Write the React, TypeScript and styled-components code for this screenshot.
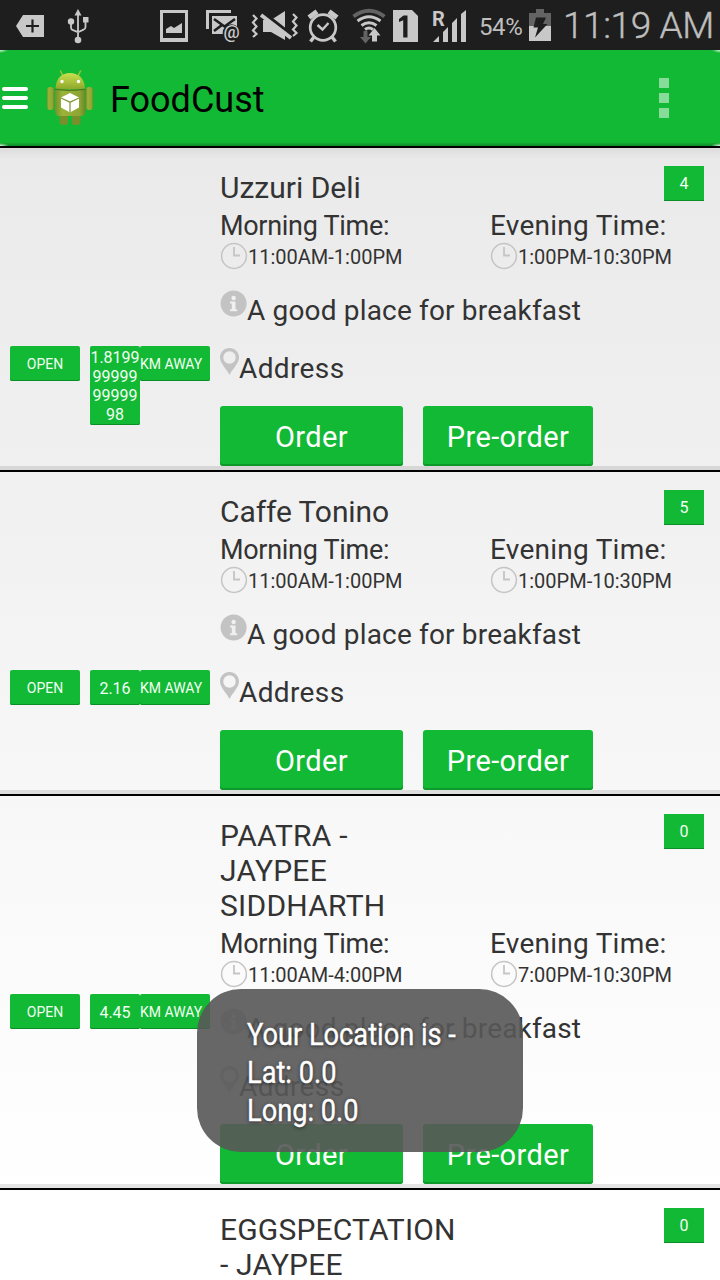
import React from "react";
import styled, { createGlobalStyle } from "styled-components";

const GREEN = "#12b934";
const INK = "#c8c8c8";
const DIM = "#636363";

const Global = createGlobalStyle`
  * { box-sizing: border-box; }
  html, body { margin: 0; padding: 0; }
  body { font-family: Roboto, "Noto Sans", sans-serif; color: #333; overflow: hidden; }
`;

const Screen = styled.div`
  position: relative;
  width: 720px;
  height: 1280px;
  overflow: hidden;
  background: linear-gradient(#eaeaea 148px, #f0f0f0 470px, #f8f8f8 820px, #fff 1200px);
`;

const StatusBar = styled.div`
  display: flex;
  height: 50px;
  background: #1e1e1e;
  color: #bebebe;
`;

const Glyph = styled.svg<{ $gap: number }>`
  flex: none;
  display: block;
  height: 50px;
  margin-left: ${(p) => p.$gap}px;
`;

const Text = styled.span<{ $size: number; $spacing?: number; $line?: number }>`
  font-size: ${(p) => p.$size}px;
  letter-spacing: ${(p) => p.$spacing ?? 0}px;
  line-height: ${(p) => p.$line ?? 35}px;
  white-space: pre;
`;

const Percent = styled(Text)`
  width: 45px;
  margin-left: 12px;
  padding-top: 2px;
`;

const Clock = styled(Text)`
  margin-left: 11px;
  padding-top: 1px;
  font-weight: 300;
  -webkit-text-stroke: 0.4px #bebebe;
`;

const ActionBar = styled.header`
  display: flex;
  align-items: center;
  height: 98px;
  padding-bottom: 2px;
  border-bottom: 2px solid #000;
  color: #000;
  background:
    radial-gradient(ellipse 8px 3px at 0 0, #d8f5dd, transparent) no-repeat,
    radial-gradient(ellipse 8px 3px at 100% 0, #d8f5dd, transparent) no-repeat,
    radial-gradient(ellipse 9px 3px at 0 100%, #e8f5ea, transparent) no-repeat,
    radial-gradient(ellipse 9px 3px at 100% 100%, #e8f5ea, transparent) no-repeat,
    linear-gradient(${GREEN} 92px, #0c8a26 96px);
`;

const Title = styled(Text)`
  padding-top: 6px;
`;

const MenuLines = styled.div`
  display: grid;
  gap: 5px;
  width: 26px;
  margin-left: 2px;
  margin-top: 2px;
`;

const MenuLine = styled.i`
  height: 4px;
  border-radius: 2px;
  background: #fff;
`;

const Robot = styled.svg`
  margin-left: 18px;
  margin-right: 16px;
  margin-top: 2px;
`;

const Overflow = styled.div`
  display: grid;
  gap: 5px;
  margin-left: auto;
  margin-right: 51px;
  margin-top: 2px;
`;

const Dot = styled.i`
  width: 10px;
  height: 10px;
  background: #88dc9a;
`;

const List = styled.main`
  display: flex;
  flex-direction: column;
`;

const Row = styled.article<{ $first?: boolean }>`
  display: grid;
  grid-template-columns: 220px 1fr;
  border-bottom: 2px solid #000;
  background: ${(p) =>
    p.$first ? "linear-gradient(rgba(0,0,0,.06), rgba(0,0,0,0) 12px)" : "none"};
  &::after {
    content: "";
    grid-column: 1 / 3;
    height: 4px;
    background: rgba(0, 0, 0, 0.1);
  }
`;

const Tags = styled.div`
  display: flex;
  align-items: flex-start;
  padding: 198px 0 0 10px;
`;

const Tag = styled.div<{ $width: number; $gap?: number }>`
  display: flex;
  justify-content: center;
  align-items: center;
  flex: none;
  width: ${(p) => p.$width}px;
  min-height: 35px;
  margin-left: ${(p) => p.$gap ?? 0}px;
  padding-top: 2px;
  border-radius: 2px;
  box-shadow: inset 0 -1px #0a8f27;
  background: ${GREEN};
  color: #f2fff4;
  font-size: 14px;
  line-height: 19px;
  text-align: center;
  white-space: pre;
`;

const AwayTag = styled(Tag)`
  justify-content: flex-start;
`;

const NumberTag = styled(Tag)`
  padding-bottom: 1px;
  font-size: 16px;
`;

const Count = styled(NumberTag)`
  border-radius: 0;
  padding-bottom: 2px;
`;

const Info = styled.div`
  padding-top: 18px;
`;

const Heading = styled.div`
  display: flex;
  justify-content: space-between;
  align-items: flex-start;
  padding-right: 16px;
  min-height: 39px;
`;

const Name = styled.h2<{ $spacing: number }>`
  margin: 0;
  padding-top: 4px;
  font-size: 30px;
  font-weight: 400;
  line-height: 35px;
  letter-spacing: ${(p) => p.$spacing}px;
  white-space: pre;
`;

const Hours = styled.div`
  display: grid;
  grid-template-columns: 270px 1fr;
  height: 66px;
`;

const Slot = styled.div`
  display: flex;
  flex-direction: column;
`;

const SlotTitle = styled(Text)<{ $drop: number }>`
  height: 37px;
  padding-top: ${(p) => p.$drop}px;
`;

const Line = styled.div<{ $height: number }>`
  display: flex;
  align-items: flex-start;
  height: ${(p) => p.$height}px;
`;

const Caption = styled(Text)<{ $drop: number }>`
  margin-top: ${(p) => p.$drop}px;
`;

const Icon = styled.svg<{ $drop?: number }>`
  display: block;
  flex: none;
  margin-top: ${(p) => p.$drop ?? 0}px;
`;

const Actions = styled.div`
  display: flex;
  gap: 20px;
`;

const Action = styled.button<{ $width: number }>`
  width: ${(p) => p.$width}px;
  height: 60px;
  padding: 2px 0 0;
  border: 0;
  border-radius: 3px;
  box-shadow: inset 0 -2px #0d9a2a;
  background: ${GREEN};
  color: #fff;
  font: 400 29px/58px Roboto, sans-serif;
  letter-spacing: 0.4px;
`;

const Toast = styled.div`
  position: absolute;
  left: 197px;
  top: 989px;
  width: 326px;
  height: 163px;
  padding: 26px 50px;
  border-radius: 44px;
  background: rgba(88, 88, 88, 0.91);
`;

const ToastText = styled.p`
  margin: 0;
  color: #fff;
  font-size: 32px;
  line-height: 38px;
  white-space: pre;
  text-shadow: 0 1px 4px #222;
  -webkit-text-stroke: 0.4px #fff;
  transform: scaleX(0.85);
  transform-origin: 0 0;
`;

const ClockIcon = () => (
  <Icon width="28" height="28" viewBox="0 0 28 28" fill="none" stroke="#c5c5c5">
    <circle cx="14" cy="14" r="12.4" strokeWidth="1.5" />
    <path d="M14 5v8.500h6" strokeWidth="1.8" />
  </Icon>
);

const InfoIcon = () => (
  <Icon $drop={19} width="27" height="28" viewBox="0 0 27 28">
    <circle cx="13.6" cy="13.5" r="13" fill="#c3c3c3" />
    <circle cx="13.6" cy="8" r="2.2" fill="#f0f0f0" />
    <path d="M10 11.500h5.500v7.800h1.700v1.900H10v-1.900h1.800v-5.800H10z" fill="#f0f0f0" />
  </Icon>
);

const PinIcon = () => (
  <Icon $drop={19} width="19" height="28" viewBox="0 0 19 28">
    <path
      d="M9.500 0C4.200 0 0 4.100 0 9.300 0 15.500 6.200 20.500 9.500 27 12.800 20.500 19 15.500 19 9.300 19 4.100 14.800 0 9.500 0zm0 3.300a6.200 6.200 0 1 1 0 12.400 6.200 6.200 0 0 1 0-12.400z"
      fill="#c3c3c3"
    />
  </Icon>
);

const RobotIcon = () => (
  <Robot width="48" height="56" viewBox="0 0 48 56">
    <defs>
      <linearGradient id="head" x1="0" x2="0" y1="0" y2="1">
        <stop offset="0" stopColor="#c9e04f" />
        <stop offset="1" stopColor="#8da62a" />
      </linearGradient>
      <linearGradient id="body" x1="0" x2="1" y1="0" y2="0">
        <stop offset="0" stopColor="#75922a" />
        <stop offset=".25" stopColor="#9bb338" />
        <stop offset=".8" stopColor="#8ea632" />
        <stop offset="1" stopColor="#6c882a" />
      </linearGradient>
    </defs>
    <path d="M14.500 1l3 6M34.500 1l-3 6" stroke="#a5bf38" strokeWidth="1.500" strokeLinecap="round" />
    <path d="M9.500 18.500C10 8 16 3 24 3s14.500 5 15 15.500q-15 2-29.500 0z" fill="url(#head)" />
    <circle cx="16" cy="11.500" r="1.700" fill="#fff" />
    <circle cx="32.500" cy="11.500" r="1.700" fill="#fff" />
    <path d="M13.500 44h8.500v8.500q0 2.500-4 2.500t-4.500-2.500zM26 44h8.500v8.500q0 2.500-4.500 2.500t-4-2.500z" fill="#78902c" />
    <rect x="1" y="17" width="7" height="23" rx="3.200" fill="url(#body)" />
    <rect x="40" y="17" width="7" height="23" rx="3.200" fill="url(#body)" />
    <path d="M9 19.500q15 2 30.500 0V41q0 5-5 5H14q-5 0-5-5z" fill="url(#body)" />
    <path d="M9 19.500q15 2 30.500 0" stroke="#56701c" fill="none" />
    <path d="M24 23l9 4.500v10l-9 5-9-5v-10z" fill="#fff" />
    <path d="M15 28l9 4.200 9-4.200M24 32.200v10.300" stroke="#87993e" strokeWidth="1.300" fill="none" />
  </Robot>
);

const StatusIcons = () => (
  <>
    <Glyph $gap={14} width="32" viewBox="14 0 32 50">
      <path d="M16 26l7-11h21v22H23z" fill={INK} />
      <path d="M26 26h13M32.500 19.500v13" stroke="#1e1e1e" strokeWidth="2.200" />
    </Glyph>
    <Glyph $gap={19} width="26" viewBox="65 0 26 50" fill="none" stroke={INK} strokeWidth="1.800">
      <path d="M78 40V13M71 22v5.500q0 2 2 2.700l5 2M85.500 20v7q0 2-2 2.700l-5.500 2.500" />
      <path d="M78 9l3.500 6.500h-7z" fill={INK} stroke="none" />
      <circle cx="78" cy="40" r="3.300" fill={INK} stroke="none" />
      <circle cx="71" cy="21.500" r="3.200" fill={INK} stroke="none" />
      <path d="M83 17h5.500v5.500H83z" fill={INK} stroke="none" />
    </Glyph>
    <Glyph $gap={67} width="32" viewBox="158 0 32 50">
      <path d="M161.500 11.500h25v28h-25z" fill="none" stroke={INK} strokeWidth="3" />
      <path d="M160 38h28v4h-28zM166 33v-4l5-3 3 2 8-5v10z" fill={INK} />
    </Glyph>
    <Glyph $gap={14} width="38" viewBox="204 0 38 50">
      <path d="M207.500 29V11.500H231" fill="none" stroke={INK} strokeWidth="3" />
      <path d="M212 16h25v18h-25z" fill={INK} />
      <path d="M214 19l10.500 7.500L235 19M214 31l8-6M232 29l-5-4" fill="none" stroke="#1e1e1e" strokeWidth="2.600" />
      <circle cx="231.500" cy="33" r="8.800" fill="#1e1e1e" />
      <text x="223.500" y="38" fontSize="18" fontWeight="500" fontFamily="Roboto" fill={INK}>@</text>
    </Glyph>
    <Glyph $gap={8} width="50" viewBox="250 0 50 50">
      <path d="M263 20h8l14-9v29l-14-8h-8z" fill={INK} />
      <path d="M261 12.500l32 25" stroke="#1e1e1e" strokeWidth="6" />
      <path d="M261 15l30 23" stroke={INK} strokeWidth="3.800" />
      <path d="M253 15l3.500 3.500-3.500 4 3.500 4-3.500 4 3.500 3.500-3.500 3M293 14l3.500 3.500-3.500 4 3.500 4-3.500 4 3.500 3.500-3.500 3" fill="none" stroke={INK} strokeWidth="2.200" />
    </Glyph>
    <Glyph $gap={6} width="34" viewBox="306 0 34 50" fill="none" stroke={INK}>
      <circle cx="323" cy="27.500" r="12.800" strokeWidth="2.700" />
      <path d="M317.500 25l5 4.500 6-6.500" strokeWidth="2.400" />
      <path d="M309 17.500l8-6M337 17.500l-8-6" strokeWidth="5" />
      <path d="M314 37l-3.500 4.500M332 37l3.500 4.500" strokeWidth="3.500" />
    </Glyph>
    <Glyph $gap={12} width="36" viewBox="352 0 36 50" fill="none" strokeWidth="3">
      <path d="M353.500 16.500q15.500-11.500 31 0" stroke={DIM} strokeWidth="3.800" />
      <path d="M357.500 21q11.500-8.500 23 0M361.500 25.500q7.500-5.500 15 0M365 29.500q4-3 8 0" stroke={INK} />
      <path d="M363.500 31h4v6h3.500l-5.500 6.500-5.500-6.500h3.500z" fill={DIM} />
      <path d="M372 41.500h5v-6h3.500l-6-7.500-6 7.500h3.500z" fill={INK} />
    </Glyph>
    <Glyph $gap={4} width="28" viewBox="392 0 28 50">
      <path d="M393 10h19l6 6v26h-25z" fill={INK} />
      <path d="M399 19l4.500-3.500h4V37.500h-4.300V20.200l-4.200 1.800z" fill="#1e1e1e" />
    </Glyph>
    <Glyph $gap={11} width="36" viewBox="431 0 36 50">
      <text x="432" y="25.500" fontSize="20" fontWeight="700" fontFamily="Roboto" fill={INK}>R</text>
      <path d="M433 42l6-6v6zM443 32l5-5v15h-5zM452 23l5-5v24h-5zM461 14l5-4v32h-5z" fill={INK} />
    </Glyph>
  </>
);

const BatteryIcon = () => (
  <Glyph $gap={4} width="24" viewBox="528 0 24 50">
    <path d="M529 13h7V9h8v4h7v13h-22z" fill={DIM} />
    <path d="M529 26h22v15h-22z" fill={INK} />
    <path d="M536 17.500h10l-3 6.500h4.500L535 37.500l3-10h-4.500z" fill="#1e1e1e" />
  </Glyph>
);

type Place = {
  name: string;
  spacing: number;
  count: string;
  distance: string;
  morning: string;
  evening: string;
};

const places: Place[] = [
  { name: "Uzzuri Deli", spacing: 0, count: "4", distance: "1.8199\n99999\n99999\n98", morning: "11:00AM-1:00PM", evening: "1:00PM-10:30PM" },
  { name: "Caffe Tonino", spacing: -0.1, count: "5", distance: "2.16", morning: "11:00AM-1:00PM", evening: "1:00PM-10:30PM" },
  { name: "PAATRA -\nJAYPEE\nSIDDHARTH", spacing: 0.25, count: "0", distance: "4.45", morning: "11:00AM-4:00PM", evening: "7:00PM-10:30PM" },
  { name: "EGGSPECTATION\n- JAYPEE", spacing: 0.18, count: "0", distance: "4.45", morning: "11:00AM-4:00PM", evening: "7:00PM-10:30PM" },
];

const PlaceRow = ({ place, first }: { place: Place; first: boolean }) => (
  <Row $first={first}>
    <Tags>
      <Tag $width={70}>OPEN</Tag>
      <NumberTag $width={50} $gap={10}>{place.distance}</NumberTag>
      <AwayTag $width={70}>KM AWAY</AwayTag>
    </Tags>
    <Info>
      <Heading>
        <Name $spacing={place.spacing}>{place.name}</Name>
        <Count $width={40}>{place.count}</Count>
      </Heading>
      <Hours>
        <Slot>
          <SlotTitle $size={27} $line={33} $spacing={-0.3} $drop={5}>Morning Time:</SlotTitle>
          <Line $height={28}>
            <ClockIcon />
            <Caption $size={20} $line={28} $drop={1}>{place.morning}</Caption>
          </Line>
        </Slot>
        <Slot>
          <SlotTitle $size={28} $line={33} $spacing={0.25} $drop={4}>Evening Time:</SlotTitle>
          <Line $height={28}>
            <ClockIcon />
            <Caption $size={20} $line={28} $drop={1}>{place.evening}</Caption>
          </Line>
        </Slot>
      </Hours>
      <Line $height={58}>
        <InfoIcon />
        <Caption $size={28} $spacing={0.17} $drop={22}>A good place for breakfast</Caption>
      </Line>
      <Line $height={77}>
        <PinIcon />
        <Caption $size={28} $spacing={0.38} $drop={22}>Address</Caption>
      </Line>
      <Actions>
        <Action $width={183}>Order</Action>
        <Action $width={170}>Pre-order</Action>
      </Actions>
    </Info>
  </Row>
);

export default function App() {
  return (
    <Screen>
      <Global />
      <StatusBar>
        <StatusIcons />
        <Percent $size={24} $line={50} $spacing={-0.4}>54%</Percent>
        <BatteryIcon />
        <Clock $size={37} $line={50} $spacing={-0.4}>11:19 AM</Clock>
      </StatusBar>
      <ActionBar>
        <MenuLines><MenuLine /><MenuLine /><MenuLine /></MenuLines>
        <RobotIcon />
        <Title $size={36}>FoodCust</Title>
        <Overflow><Dot /><Dot /><Dot /></Overflow>
      </ActionBar>
      <List>
        {places.map((place, i) => (
          <PlaceRow key={place.name} place={place} first={i === 0} />
        ))}
      </List>
      <Toast>
        <ToastText>{"Your Location is -\nLat: 0.0\nLong: 0.0"}</ToastText>
      </Toast>
    </Screen>
  );
}
